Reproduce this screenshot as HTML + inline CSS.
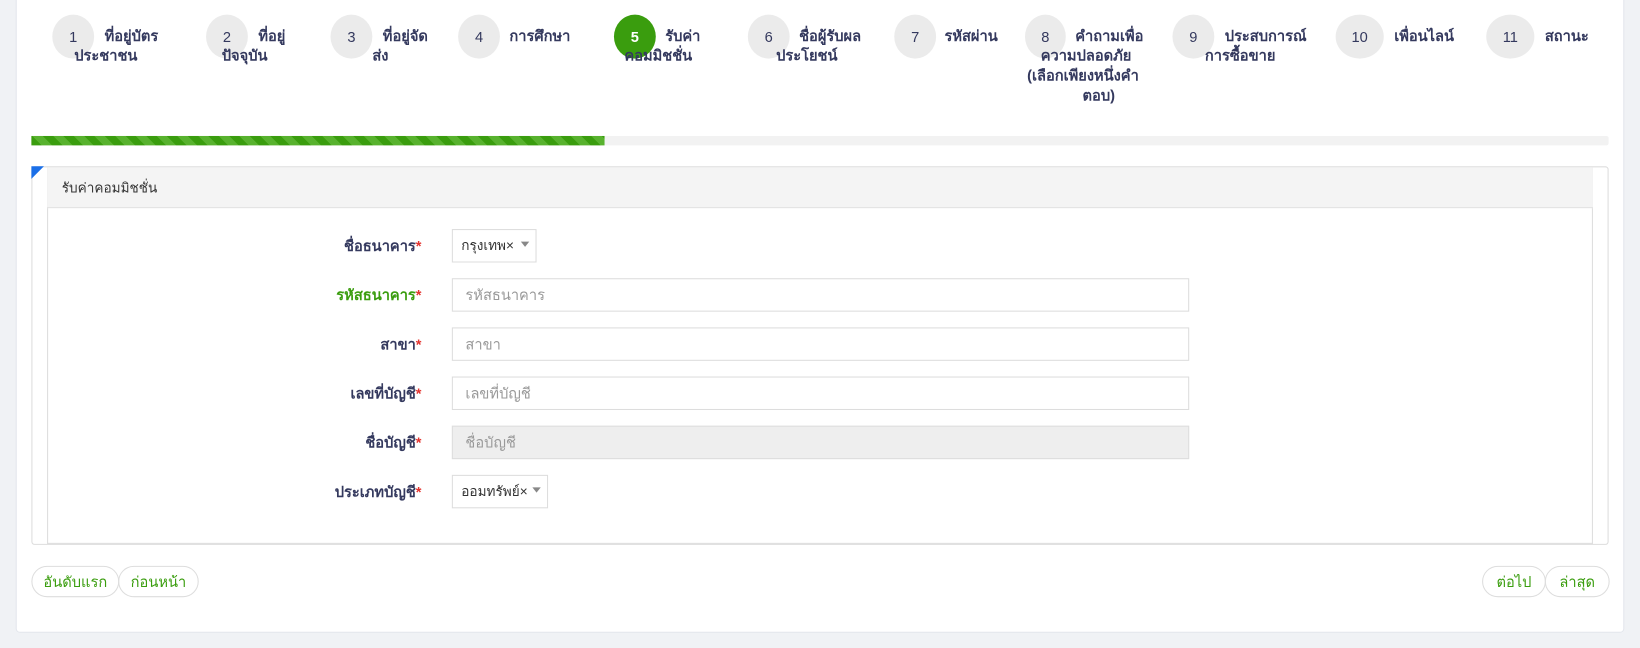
<!DOCTYPE html><html><head><meta charset="utf-8"><style>
body{margin:0;width:1640px;height:648px;background:#f0f2f5;font-family:"Liberation Sans","Noto Sans CJK SC",sans-serif;position:relative;overflow:hidden}
#w{position:absolute;left:0;top:0;width:1568px;height:620px;transform:scale(1.04592);transform-origin:0 0}
.card{position:absolute;left:15px;top:-5px;width:1538px;height:610px;background:#fff;border:1px solid #e3e6ec;border-radius:4px;box-sizing:border-box}
.a{position:absolute}
.c{position:absolute;top:14px;height:42px;border-radius:50%;background:#ebebeb;color:#34395e;font-size:14px;line-height:42px;text-align:center}
.t{position:absolute;font-size:14px;font-weight:bold;color:#34395e;line-height:19px;white-space:nowrap}
.lbl{position:absolute;right:1165px;font-size:14px;font-weight:bold;color:#34395e;line-height:32px}
.lbl b{color:#e3342f}
.in{position:absolute;left:432px;width:705px;height:32px;border:1px solid #ddd;box-sizing:border-box;font-size:14px;color:#999;line-height:30px;padding-left:12px}
.sel{position:absolute;left:432px;height:32px;border:1px solid #ddd;box-sizing:border-box;font-size:13px;color:#333;line-height:30px;padding-left:8px}
.sel:after{content:"";position:absolute;right:6px;top:11px;border:4px solid transparent;border-top:5px solid #888}
.btn{position:absolute;top:541px;height:30px;border:1px solid #ddd;border-radius:15px;box-sizing:border-box;font-size:14px;color:#3a9d0e;line-height:28px;text-align:center}
</style></head><body><div id="w">
<div class="card"></div>
<div class="c" style="left:50px;width:40px">1</div>
<div class="t" style="left:100px;top:25px">ที่อยู่บัตร</div><div class="t" style="left:71px;top:44px">ประชาชน</div>
<div class="c" style="left:197px;width:40px">2</div>
<div class="t" style="left:247px;top:25px">ที่อยู่</div><div class="t" style="left:212px;top:44px">ปัจจุบัน</div>
<div class="c" style="left:316px;width:40px">3</div>
<div class="t" style="left:366px;top:25px">ที่อยู่จัด</div><div class="t" style="left:356px;top:44px">ส่ง</div>
<div class="c" style="left:438px;width:40px">4</div>
<div class="t" style="left:487px;top:25px">การศึกษา</div>
<div class="c" style="left:587px;width:40px;background:#3a9d0e;color:#fff;font-weight:bold">5</div>
<div class="t" style="left:636px;top:25px">รับค่า</div><div class="t" style="left:597px;top:44px">คอมมิชชั่น</div>
<div class="c" style="left:715px;width:40px">6</div>
<div class="t" style="left:764px;top:25px">ชื่อผู้รับผล</div><div class="t" style="left:742px;top:44px">ประโยชน์</div>
<div class="c" style="left:855px;width:40px">7</div>
<div class="t" style="left:903px;top:25px">รหัสผ่าน</div>
<div class="c" style="left:980px;width:39px">8</div>
<div class="t" style="left:1028px;top:25px">คำถามเพื่อ</div><div class="t" style="left:995px;top:44px">ความปลอดภัย</div><div class="t" style="left:982px;top:63px">(เลือกเพียงหนึ่งคำ</div><div class="t" style="left:1035px;top:82px">ตอบ)</div>
<div class="c" style="left:1121px;width:40px">9</div>
<div class="t" style="left:1171px;top:25px">ประสบการณ์</div><div class="t" style="left:1152px;top:44px">การซื้อขาย</div>
<div class="c" style="left:1277px;width:46px">10</div>
<div class="t" style="left:1333px;top:25px">เพื่อนไลน์</div>
<div class="c" style="left:1421px;width:46px">11</div>
<div class="t" style="left:1477px;top:25px">สถานะ</div>
<div class="a" style="left:30px;top:130px;width:1508px;height:9px;background:#f2f2f2;border-radius:2px"></div>
<div class="a" style="left:30px;top:130px;width:548px;height:9px;background:repeating-linear-gradient(45deg,#3a9d0e 0 7px,#58b22e 7px 14px)"></div>
<div class="a" style="left:30px;top:159px;width:1508px;height:362px;border:1px solid #ddd;border-radius:3px;box-sizing:border-box"></div>
<div class="a" style="left:30px;top:159px;width:0;height:0;border-top:12px solid #1a6fe8;border-right:12px solid transparent"></div>
<div class="a" style="left:45px;top:160px;width:1478px;height:360px;border:1px solid #ddd;border-top:0;box-sizing:border-box"></div>
<div class="a" style="left:45px;top:160px;width:1478px;height:39px;background:#f4f4f4;border-bottom:1px solid #e2e2e2;box-sizing:border-box;font-size:13px;color:#333;line-height:39px;padding-left:14px">รับค่าคอมมิชชั่น</div>
<div class="lbl" style="top:219px">ชื่อธนาคาร<b>*</b></div><div class="sel" style="top:219px;width:81px">กรุงเทพ×</div>
<div class="lbl" style="top:266px;color:#3a9d0e">รหัสธนาคาร<b>*</b></div><div class="in" style="top:266px">รหัสธนาคาร</div>
<div class="lbl" style="top:313px">สาขา<b>*</b></div><div class="in" style="top:313px">สาขา</div>
<div class="lbl" style="top:360px">เลขที่บัญชี<b>*</b></div><div class="in" style="top:360px">เลขที่บัญชี</div>
<div class="lbl" style="top:407px">ชื่อบัญชี<b>*</b></div><div class="in" style="top:407px;background:#eee">ชื่อบัญชี</div>
<div class="lbl" style="top:454px">ประเภทบัญชี<b>*</b></div><div class="sel" style="top:454px;width:92px">ออมทรัพย์×</div>
<div class="btn" style="left:30px;width:84px">อันดับแรก</div>
<div class="btn" style="left:113px;width:77px">ก่อนหน้า</div>
<div class="btn" style="left:1417px;width:61px">ต่อไป</div>
<div class="btn" style="left:1477px;width:62px">ล่าสุด</div>
</div></body></html>
